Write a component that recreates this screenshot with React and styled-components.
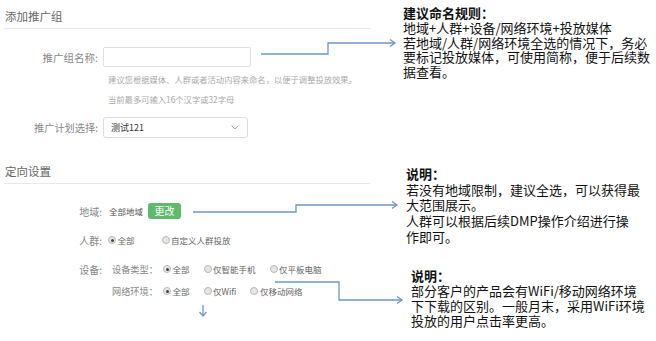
import React from "react";
import styled, { createGlobalStyle } from "styled-components";

const Global = createGlobalStyle`
  body {
    margin: 0;
    background: #fff;
    font-family: "Noto Sans CJK SC", "Noto Sans", sans-serif;
  }
`;

const Page = styled.div`
  position: relative;
  width: 656px;
  height: 341px;
  display: flex;
  overflow: hidden;
`;

const FormCol = styled.div`
  width: 366px;
  padding-left: 4px;
  flex-shrink: 0;
`;

const NoteCol = styled.div`
  flex: 1;
  display: flex;
  flex-direction: column;
`;

const Heading = styled.div`
  font-size: 11.5px;
  line-height: 16px;
  color: #666;
  padding: 8px 0 4px 1px;
  border-bottom: 1px solid #e8e8e8;
  margin-top: ${(p) => p.$top || 0}px;
`;

const Row = styled.div`
  display: flex;
  align-items: center;
  margin-top: ${(p) => p.$top || 0}px;
  height: ${(p) => p.$h || 16}px;
`;

const Label = styled.div`
  width: ${(p) => p.$w || 99}px;
  flex-shrink: 0;
  text-align: right;
  padding-right: ${(p) => p.$pr || 5}px;
  box-sizing: border-box;
  font-size: ${(p) => p.$size || 10}px;
  color: #888;
  white-space: nowrap;
`;

const Input = styled.div`
  width: 148px;
  height: 20px;
  box-sizing: border-box;
  border: 1px solid #e0e0e0;
  border-radius: 2px;
  background: #fff;
`;

const Hint = styled.div`
  margin: ${(p) => p.$top || 0}px 0 0 104px;
  font-size: 8.3px;
  line-height: 12px;
  color: #aaa;
  white-space: nowrap;
`;

const Select = styled.div`
  width: 145px;
  height: 21px;
  box-sizing: border-box;
  border: 1px solid #ddd;
  border-radius: 3px;
  display: flex;
  align-items: center;
  justify-content: space-between;
  padding: 0 8px 0 7px;
  font-size: 9px;
  color: #333;
`;

const Value = styled.span`
  font-size: 8.5px;
  color: #555;
  margin-left: 1px;
  white-space: nowrap;
`;

const Button = styled.button`
  margin-left: 5px;
  width: 33px;
  height: 16px;
  padding: 0;
  border: none;
  border-radius: 3px;
  background: #5dbb6b;
  color: #fff;
  font-family: inherit;
  font-size: 10px;
  line-height: 16px;
`;

const Options = styled.div`
  display: flex;
  align-items: center;
  gap: ${(p) => p.$gap || 14}px;
`;

const Option = styled.label`
  display: flex;
  align-items: center;
  gap: 1.5px;
  font-size: 8.5px;
  color: #666;
  white-space: nowrap;
`;

const Radio = styled.span`
  width: 8px;
  height: 8px;
  box-sizing: border-box;
  border-radius: 50%;
  border: 1px solid #b8b8b8;
  background: #e6e6e6;
  display: flex;
  align-items: center;
  justify-content: center;
  &::after {
    content: "";
    width: 3px;
    height: 3px;
    border-radius: 50%;
    background: ${(p) => (p.$on ? "#444" : "transparent")};
  }
`;

const SubLabel = styled.span`
  width: 51px;
  margin-left: 4px;
  font-size: 9.2px;
  color: #888;
  white-space: nowrap;
`;

const Note = styled.div`
  margin: ${(p) => p.$top}px 0 0 ${(p) => p.$left}px;
  font-size: 13px;
  line-height: ${(p) => p.$lh}px;
  color: #111;
  white-space: nowrap;
  b {
    font-weight: 700;
  }
`;

const Lines = styled.svg`
  position: absolute;
  left: 0;
  top: 0;
  pointer-events: none;
`;

function Choice({ on, children }) {
  return (
    <Option>
      <Radio $on={on} />
      {children}
    </Option>
  );
}

export default function App() {
  return (
    <>
      <Global />
      <Page>
        <FormCol>
          <Heading>添加推广组</Heading>
          <Row $top={18} $h={20}>
            <Label $size={10.5}>推广组名称:</Label>
            <Input />
          </Row>
          <Hint $top={6}>建议您根据媒体、人群或者活动内容来命名，以便于调整投放效果。</Hint>
          <Hint $top={8}>当前最多可输入16个汉字或32字母</Hint>
          <Row $top={12} $h={21}>
            <Label $size={10.2}>推广计划选择:</Label>
            <Select>
              测试121
              <svg width="8" height="5" viewBox="0 0 8 5">
                <path d="M0.5 0.5 L4 4 L7.5 0.5" fill="none" stroke="#aaa" strokeWidth="1" />
              </svg>
            </Select>
          </Row>

          <Heading $top={17}>定向设置</Heading>
          <Row $top={19}>
            <Label $w={104} $pr={6}>地域:</Label>
            <Value>全部地域</Value>
            <Button>更改</Button>
          </Row>
          <Row $top={13}>
            <Label $w={104} $pr={6}>人群:</Label>
            <Options $gap={27}>
              <Choice on>全部</Choice>
              <Choice>自定义人群投放</Choice>
            </Options>
          </Row>
          <Row $top={13}>
            <Label $w={104} $pr={6}>设备:</Label>
            <SubLabel>设备类型：</SubLabel>
            <Options>
              <Choice on>全部</Choice>
              <Choice>仅智能手机</Choice>
              <Choice>仅平板电脑</Choice>
            </Options>
          </Row>
          <Row $top={6}>
            <Label $w={104} $pr={6} />
            <SubLabel>网络环境：</SubLabel>
            <Options>
              <Choice on>全部</Choice>
              <Choice>仅Wifi</Choice>
              <Choice>仅移动网络</Choice>
            </Options>
          </Row>
        </FormCol>

        <NoteCol>
          <Note $top={6} $left={33} $lh={14.75}>
            <b>建议命名规则：</b>
            <br />地域+人群+设备/网络环境+投放媒体
            <br />若地域/人群/网络环境全选的情况下，务必
            <br />要标记投放媒体，可使用简称，便于后续数
            <br />据查看。
          </Note>
          <Note $top={86} $left={36} $lh={15.75}>
            <b>说明：</b>
            <br />若没有地域限制，建议全选，可以获得最
            <br />大范围展示。
            <br />人群可以根据后续DMP操作介绍进行操
            <br />作即可。
          </Note>
          <Note $top={23} $left={41} $lh={15.3}>
            <b>说明：</b>
            <br />部分客户的产品会有WiFi/移动网络环境
            <br />下下载的区别。一般月末，采用WiFi环境
            <br />投放的用户点击率更高。
          </Note>
        </NoteCol>

        <Lines width="656" height="341" viewBox="0 0 656 341">
          <g fill="none" stroke="#6f95c8" strokeWidth="1.3">
            <path d="M261 54 H328 V43 H395" />
            <path d="M390 39.5 L395 43 L390 46.5" />
            <path d="M193 212 H296 V205 H397" />
            <path d="M392 201.5 L397 205 L392 208.5" />
            <path d="M275 282 H339 V300 H402" />
            <path d="M397 296.5 L402 300 L397 303.5" />
            <path d="M203 305 V316" />
            <path d="M199.5 312 L203 316 L206.5 312" />
          </g>
        </Lines>
      </Page>
    </>
  );
}
